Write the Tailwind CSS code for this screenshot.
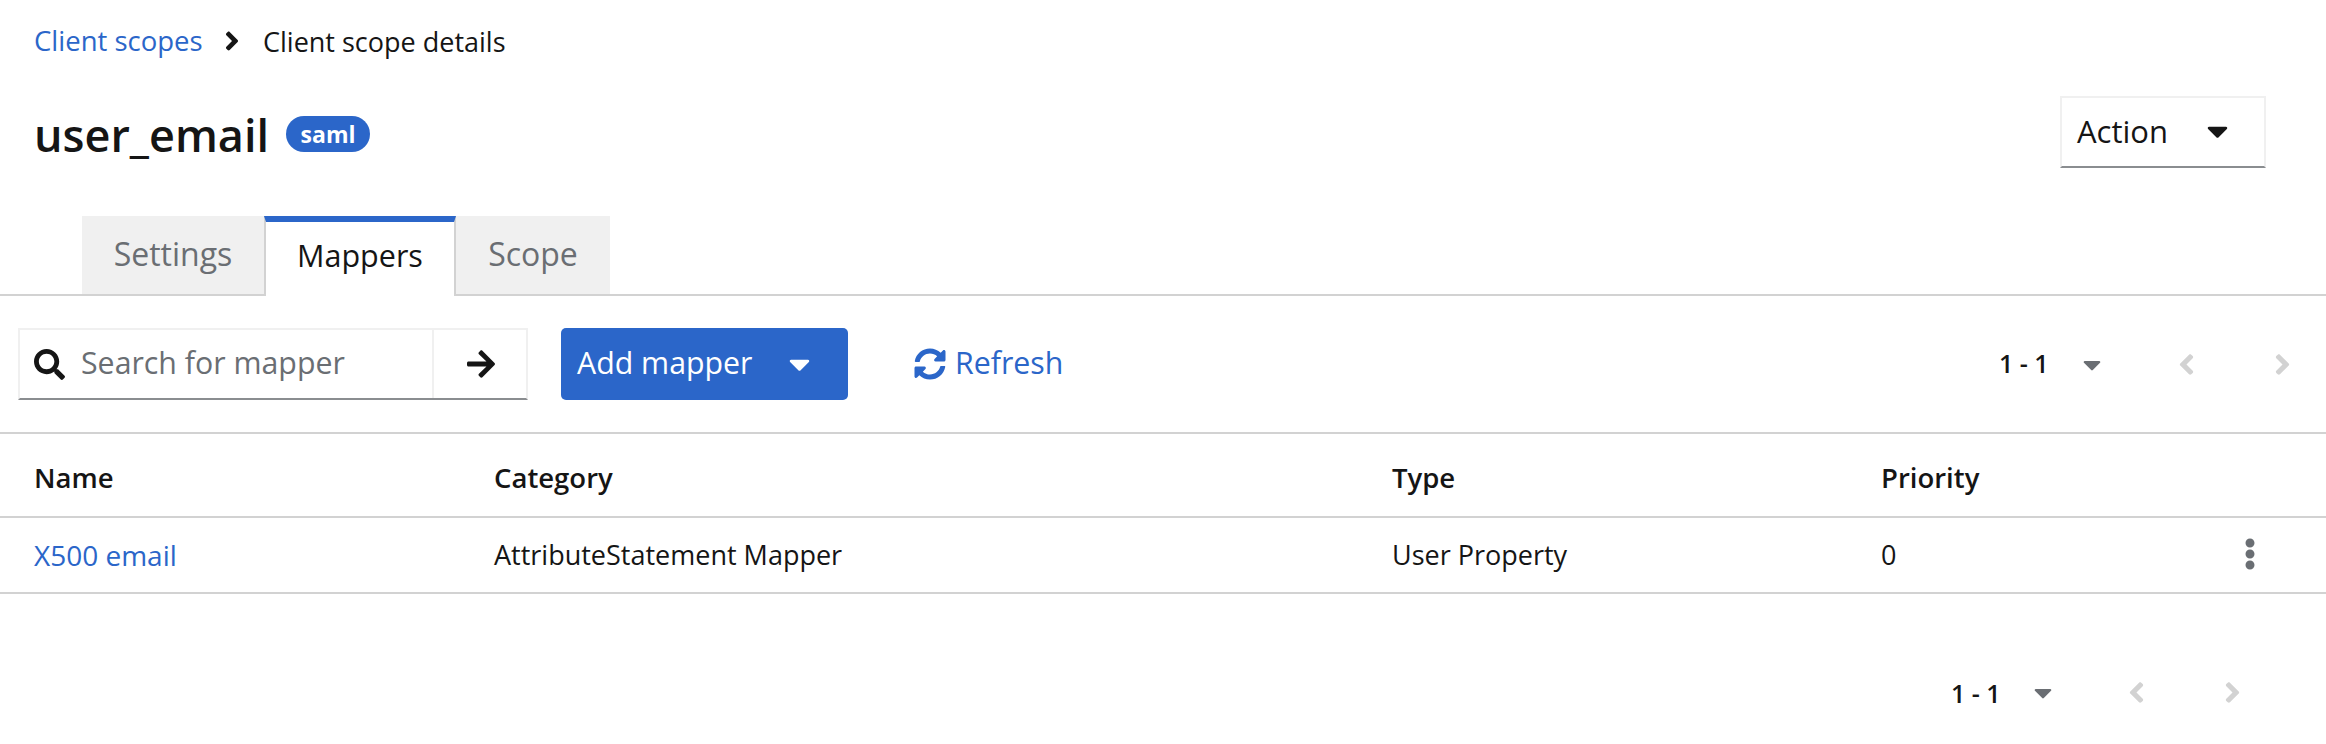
<!doctype html>
<html><head><meta charset="utf-8"><script src="https://cdn.jsdelivr.net/npm/@tailwindcss/browser@4"></script></head>
<body class="bg-white">
<div class="w-[2326px] h-[744px] overflow-hidden bg-white text-[#151515] font-['Open_Sans','Noto_Sans',sans-serif] text-[27px]">
  <nav class="h-[84px] pl-[34px] pb-[2px] flex items-center leading-none text-[27.5px]">
    <span class="text-[#2b66c9] w-[190px] whitespace-nowrap">Client scopes</span>
    <svg class="w-[16px] h-[30px] fill-[#151515]" viewBox="0 0 256 512"><path d="M224.3 273l-136 136c-9.4 9.4-24.6 9.4-33.9 0l-22.6-22.6c-9.4-9.4-9.4-24.6 0-33.9l96.4-96.4-96.4-96.4c-9.4-9.4-9.4-24.6 0-33.9L54.3 103c9.4-9.4 24.6-9.4 33.9 0l136 136c9.5 9.4 9.5 24.6.1 34z"/></svg>
    <span class="ml-[23px] whitespace-nowrap text-[27px]">Client scope details</span>
  </nav>
  <header class="h-[132px] pl-[34px] pr-[60px] flex items-start justify-between">
    <div class="flex items-center h-[100px]">
      <h1 class="text-[45px] font-semibold leading-none whitespace-nowrap">user_email</h1>
      <span class="ml-[17px] w-[84px] h-[36px] rounded-full bg-[#2b66c9] text-white text-[23px] font-bold flex items-center justify-center">saml</span>
    </div>
    <button class="mt-[12px] w-[206px] h-[72px] pb-[2px] border-2 border-[#f0f0f0] border-b-[#8a8d90] flex items-center pl-[15px] text-[31px]">
      <span>Action</span>
      <svg class="ml-[39px] w-[21px] h-[34px] fill-[#151515]" viewBox="0 0 320 512"><path d="M31.3 192h257.3c17.8 0 26.7 21.5 14.1 34.1L174.1 354.8c-7.8 7.8-20.5 7.8-28.3 0L17.2 226.1C4.6 213.5 13.5 192 31.3 192z"/></svg>
    </button>
  </header>
  <div class="h-[80px] pl-[82px] flex items-end border-b-2 border-[#d2d2d2] text-[32px]">
    <div class="w-[182px] h-[78px] pb-[2px] bg-[#f0f0f0] text-[#6a6e73] flex items-center justify-center">Settings</div>
    <div class="w-[192px] h-[80px] -mb-[2px] pb-[6px] bg-white border-x-2 border-[#d2d2d2] border-t-[6px] border-t-[#2b66c9] flex items-center justify-center text-[30.5px]">Mappers</div>
    <div class="w-[154px] h-[78px] pb-[2px] bg-[#f0f0f0] text-[#6a6e73] flex items-center justify-center">Scope</div>
  </div>
  <div class="h-[138px] pl-[18px] flex items-start pt-[32px] border-b-2 border-[#d2d2d2] relative">
    <div class="flex h-[72px] w-[510px] border-2 border-[#f0f0f0] border-b-[#8a8d90]">
      <div class="w-[414px] flex items-center pl-[14px] border-r-2 border-[#f0f0f0]">
        <svg class="w-[31px] h-[31px] fill-[#151515]" viewBox="0 0 512 512"><path d="M505 442.7L405.3 343c-4.5-4.5-10.6-7-17-7H372c27.6-35.3 44-79.7 44-128C416 93.1 322.9 0 208 0S0 93.1 0 208s93.1 208 208 208c48.3 0 92.7-16.4 128-44v16.3c0 6.4 2.5 12.5 7 17l99.7 99.7c9.4 9.4 24.6 9.4 33.9 0l28.3-28.3c9.4-9.4 9.4-24.6.1-34zM208 336c-70.7 0-128-57.2-128-128 0-70.7 57.2-128 128-128 70.7 0 128 57.2 128 128 0 70.7-57.2 128-128 128z"/></svg>
        <span class="ml-[16px] pb-[2px] text-[30.3px] text-[#6a6e73] whitespace-nowrap">Search for mapper</span>
      </div>
      <div class="flex-1 flex items-center justify-center pl-[2px]">
        <svg class="w-[28px] h-[32px] fill-[#151515]" viewBox="0 0 448 512"><path d="M190.5 66.9l22.2-22.2c9.4-9.4 24.6-9.4 33.9 0L441 239c9.4 9.4 9.4 24.6 0 33.9L246.6 467.3c-9.4 9.4-24.6 9.4-33.9 0l-22.2-22.2c-9.5-9.5-9.3-25 .4-34.3L311.4 296H24c-13.3 0-24-10.7-24-24v-32c0-13.3 10.7-24 24-24h287.4L190.9 101.2c-9.8-9.3-10-24.8-.4-34.3z"/></svg>
      </div>
    </div>
    <button class="ml-[33px] w-[287px] h-[72px] rounded-[5px] bg-[#2b66c9] text-white text-[30.3px] flex items-center pl-[16px]">
      <span class="pb-[2px]">Add mapper</span>
      <svg class="ml-[37px] w-[21px] h-[34px] fill-white" viewBox="0 0 320 512"><path d="M31.3 192h257.3c17.8 0 26.7 21.5 14.1 34.1L174.1 354.8c-7.8 7.8-20.5 7.8-28.3 0L17.2 226.1C4.6 213.5 13.5 192 31.3 192z"/></svg>
    </button>
    <div class="ml-[66px] h-[72px] flex items-center text-[#2b66c9] text-[30.3px]">
      <svg class="w-[32px] h-[32px] fill-[#2b66c9]" viewBox="0 0 512 512"><path d="M370.72 133.28C339.458 104.008 298.888 87.962 255.848 88c-77.458.068-144.328 53.178-162.791 126.85-1.344 5.363-6.122 9.15-11.651 9.15H24.103c-7.498 0-13.194-6.807-11.807-14.176C33.933 94.924 134.813 8 256 8c66.448 0 126.791 26.136 171.315 68.685L463.03 40.97C478.149 25.851 504 36.559 504 57.941V192c0 13.255-10.745 24-24 24H345.941c-21.382 0-32.09-25.851-16.971-40.971l41.75-41.749zM32 296h134.059c21.382 0 32.09 25.851 16.971 40.971l-41.75 41.75c31.262 29.273 71.835 45.319 114.876 45.28 77.418-.07 144.315-53.144 162.787-126.849 1.344-5.363 6.122-9.15 11.651-9.15h57.304c7.498 0 13.194 6.807 11.807 14.176C478.067 417.076 377.187 504 256 504c-66.448 0-126.791-26.136-171.315-68.685L48.97 471.03C33.851 486.149 8 475.441 8 454.059V320c0-13.255 10.745-24 24-24z"/></svg>
      <span class="ml-[9px] pb-[2px]">Refresh</span>
    </div>
    <div class="ml-auto pr-[35px] h-[72px] flex items-center font-semibold text-[25px]">
      <span class="w-[48px] whitespace-nowrap">1 - 1</span>
      <svg class="ml-[36px] w-[18px] h-[29px] fill-[#6a6e73]" viewBox="0 0 320 512"><path d="M31.3 192h257.3c17.8 0 26.7 21.5 14.1 34.1L174.1 354.8c-7.8 7.8-20.5 7.8-28.3 0L17.2 226.1C4.6 213.5 13.5 192 31.3 192z"/></svg>
      <svg class="ml-[77px] w-[17px] h-[33px] fill-[#d2d2d2]" viewBox="0 0 256 512"><path d="M31.7 239l136-136c9.4-9.4 24.6-9.4 33.9 0l22.6 22.6c9.4 9.4 9.4 24.6 0 33.9L127.9 256l96.4 96.4c9.4 9.4 9.4 24.6 0 33.9L201.7 409c-9.4 9.4-24.6 9.4-33.9 0l-136-136c-9.5-9.4-9.5-24.6-.1-34z"/></svg>
      <svg class="ml-[79px] w-[17px] h-[33px] fill-[#d2d2d2]" viewBox="0 0 256 512"><path d="M224.3 273l-136 136c-9.4 9.4-24.6 9.4-33.9 0l-22.6-22.6c-9.4-9.4-9.4-24.6 0-33.9l96.4-96.4-96.4-96.4c-9.4-9.4-9.4-24.6 0-33.9L54.3 103c9.4-9.4 24.6-9.4 33.9 0l136 136c9.5 9.4 9.5 24.6.1 34z"/></svg>
    </div>
  </div>
  <div class="grid grid-cols-[460px_898px_489px_1fr] h-[84px] pt-[6px] items-center pl-[34px] border-b-2 border-[#d2d2d2] font-semibold text-[27.5px]">
    <div>Name</div><div>Category</div><div>Type</div><div>Priority</div>
  </div>
  <div class="grid grid-cols-[460px_898px_489px_1fr] h-[76px] items-center pl-[34px] border-b-2 border-[#d2d2d2]">
    <div class="text-[#2b66c9] text-[28px]">X500 email</div><div>AttributeStatement Mapper</div><div>User Property</div>
    <div class="flex items-center justify-between pr-[70px]"><span>0</span>
      <svg class="w-[12px] h-[32px] -mt-[2px] fill-[#6a6e73]" viewBox="0 0 192 512"><path d="M96 184c39.8 0 72 32.2 72 72s-32.2 72-72 72-72-32.2-72-72 32.2-72 72-72zM24 80c0 39.8 32.2 72 72 72s72-32.2 72-72S135.8 8 96 8 24 40.2 24 80zm0 352c0 39.8 32.2 72 72 72s72-32.2 72-72-32.2-72-72-72-72 32.2-72 72z"/></svg>
    </div>
  </div>
  <div class="h-[149px] pt-[85px] pr-[85px] flex items-start justify-end font-semibold leading-none text-[25px]">
    <span class="w-[48px] whitespace-nowrap mt-[2px]">1 - 1</span>
    <svg class="ml-[35px] -mt-[1px] w-[18px] h-[29px] fill-[#6a6e73]" viewBox="0 0 320 512"><path d="M31.3 192h257.3c17.8 0 26.7 21.5 14.1 34.1L174.1 354.8c-7.8 7.8-20.5 7.8-28.3 0L17.2 226.1C4.6 213.5 13.5 192 31.3 192z"/></svg>
    <svg class="ml-[76px] -mt-[3px] w-[17px] h-[33px] fill-[#d2d2d2]" viewBox="0 0 256 512"><path d="M31.7 239l136-136c9.4-9.4 24.6-9.4 33.9 0l22.6 22.6c9.4 9.4 9.4 24.6 0 33.9L127.9 256l96.4 96.4c9.4 9.4 9.4 24.6 0 33.9L201.7 409c-9.4 9.4-24.6 9.4-33.9 0l-136-136c-9.5-9.4-9.5-24.6-.1-34z"/></svg>
    <svg class="ml-[79px] -mt-[3px] w-[17px] h-[33px] fill-[#d2d2d2]" viewBox="0 0 256 512"><path d="M224.3 273l-136 136c-9.4 9.4-24.6 9.4-33.9 0l-22.6-22.6c-9.4-9.4-9.4-24.6 0-33.9l96.4-96.4-96.4-96.4c-9.4-9.4-9.4-24.6 0-33.9L54.3 103c9.4-9.4 24.6-9.4 33.9 0l136 136c9.5 9.4 9.5 24.6.1 34z"/></svg>
  </div>
</div>
</body></html>
